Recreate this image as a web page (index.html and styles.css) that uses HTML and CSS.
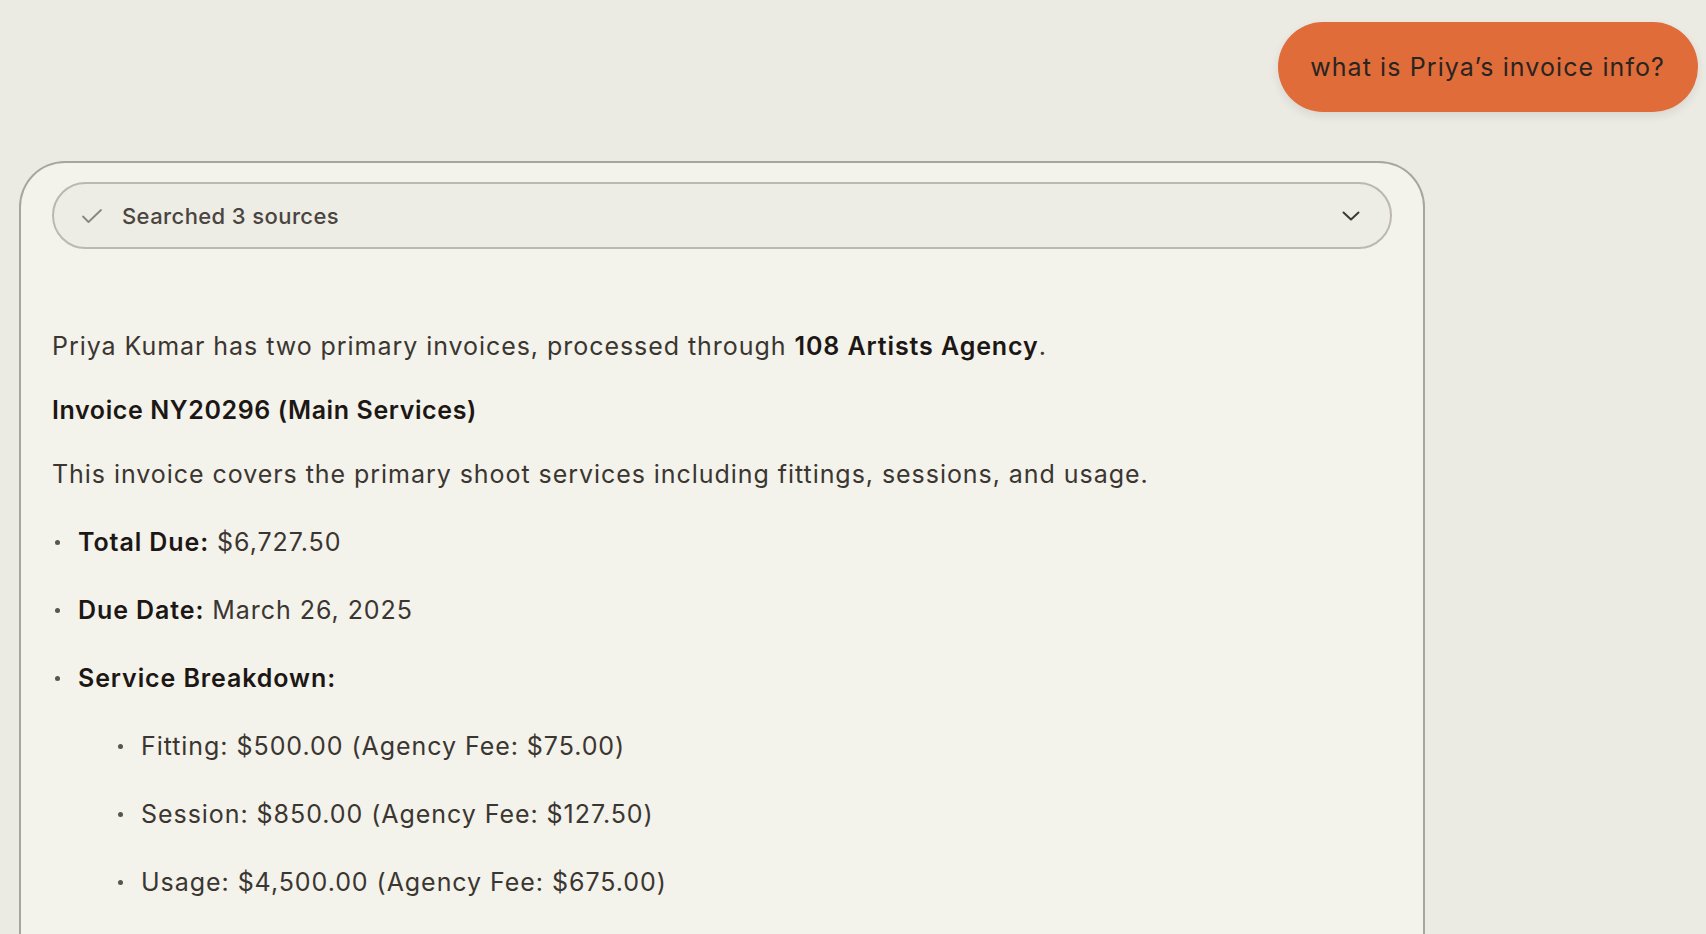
FILE: index.html
```html
<!DOCTYPE html>
<html lang="en">
<head>
<meta charset="utf-8">
<title>Chat</title>
<link rel="stylesheet" href="styles.css">
</head>
<body>
<div class="page">
  <div class="user-row">
    <div class="bubble">what is Priya’s invoice info?</div>
  </div>
  <div class="card">
    <div class="pill">
      <svg class="check" width="22" height="16" viewBox="0 0 22 16" fill="none"><path d="M2 8.5 L7.5 14 L20 2" stroke="#8a857e" stroke-width="1.8" stroke-linecap="round" stroke-linejoin="round"/></svg>
      <span class="pill-text">Searched 3 sources</span>
      <svg class="chev" width="18" height="10" viewBox="0 0 18 10" fill="none"><path d="M1.5 1.5 L9 8.5 L16.5 1.5" stroke="#3d3833" stroke-width="2" stroke-linecap="round" stroke-linejoin="round"/></svg>
    </div>
    <div class="answer">
      <p>Priya Kumar has two primary invoices, processed through <strong>108 Artists Agency</strong>.</p>
      <h3>Invoice NY20296 (Main Services)</h3>
      <p>This invoice covers the primary shoot services including fittings, sessions, and usage.</p>
      <ul class="list">
        <li><strong>Total Due:</strong> $6,727.50</li>
        <li><strong>Due Date:</strong> March 26, 2025</li>
        <li><strong>Service Breakdown:</strong>
          <ul class="sub">
            <li>Fitting: $500.00 (Agency Fee: $75.00)</li>
            <li>Session: $850.00 (Agency Fee: $127.50)</li>
            <li>Usage: $4,500.00 (Agency Fee: $675.00)</li>
          </ul>
        </li>
      </ul>
    </div>
  </div>
</div>
</body>
</html>
```

FILE: styles.css
```css
html, body {
  margin: 0;
  padding: 0;
  background: #ebeae3;
  height: 100%;
  overflow: hidden;
}
body {
  font-family: "Inter", "Noto Sans", sans-serif;
  color: #3b3631;
}
.page {
  padding: 22px 8px 0 19px;
}
.user-row {
  display: flex;
  justify-content: flex-end;
}
.bubble {
  height: 90px;
  box-sizing: border-box;
  padding: 0 33px 0 32px;
  display: flex;
  align-items: center;
  background: #e06c3a;
  color: #2a2420;
  border-radius: 45px;
  font-size: 25px;
  letter-spacing: 1.1px;
  box-shadow: 0 4px 8px rgba(60, 50, 40, 0.10);
}
.card {
  margin-top: 49px;
  width: 1406px;
  box-sizing: border-box;
  height: 800px;
  background: #f3f2eb;
  border: 2px solid #a8a59d;
  border-bottom: none;
  border-radius: 46px 46px 0 0;
  padding: 19px 31px 0 31px;
}
.pill {
  height: 67px;
  box-sizing: border-box;
  border: 2px solid #bcb8b0;
  border-radius: 34px;
  background: #edece5;
  display: flex;
  align-items: center;
  padding: 0 30px 0 27px;
}
.check {
  flex: none;
  margin-top: 1px;
}
.pill-text {
  margin-left: 19px;
  font-size: 22px;
  letter-spacing: 0.4px;
  color: #4a4540;
  font-weight: 500;
  flex: 1;
}
.chev {
  flex: none;
}
.answer {
  margin-top: 78px;
  font-size: 25px;
  line-height: 38px;
  letter-spacing: 0.95px;
}
.answer p {
  margin: 0 0 26px;
}
.answer strong {
  color: #1c1714;
  font-weight: 600;
  letter-spacing: 0.9px;
}
.answer h3 {
  margin: 0 0 26px;
  font-size: 25px;
  line-height: 38px;
  font-weight: 600;
  letter-spacing: 0.6px;
  color: #1c1714;
}
.list, .sub {
  list-style: none;
  margin: 0;
  padding: 0;
}
.list {
  margin-top: 30px;
  padding-left: 26px;
}
.list > li, .sub > li {
  position: relative;
  margin-bottom: 30px;
}
.list > li::before, .sub > li::before {
  content: "";
  position: absolute;
  width: 5px;
  height: 5px;
  border-radius: 50%;
  background: #5a544e;
  top: 17px;
}
.list > li::before {
  left: -23px;
}
.sub {
  margin-top: 30px;
  padding-left: 63px;
}
.sub > li::before {
  left: -23px;
}
```
